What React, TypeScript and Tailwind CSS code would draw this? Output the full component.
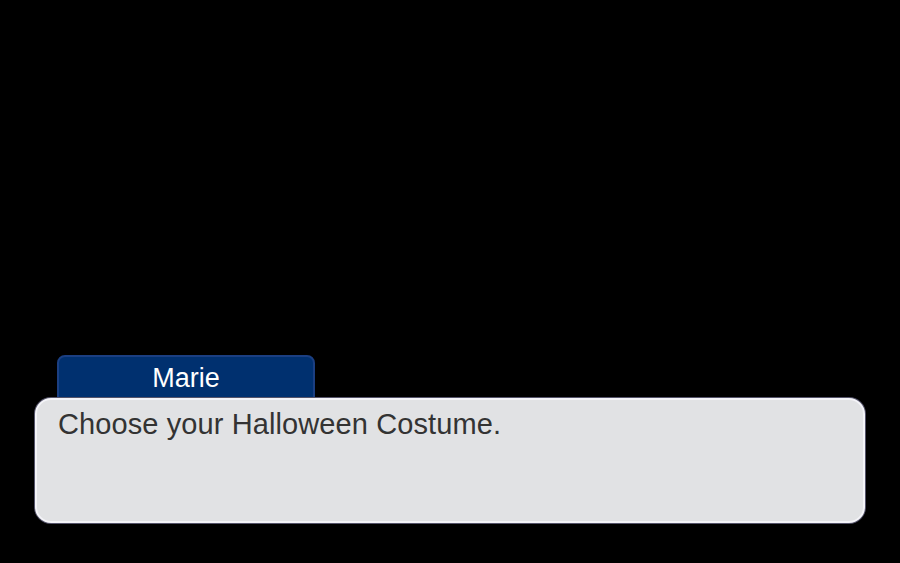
import React from "react";

/* dialogue box with speaker tab */

const App = () => {
  return (
    <div className="w-full h-screen bg-black flex flex-col justify-end px-[35px] pb-[40px] font-['Liberation_Sans',Arial,sans-serif]">

      {/* NAME TAB */}
      <div className="ml-[22px] w-[258px] h-[50px] -mb-[7px] rounded-t-[8px] border-2 border-[#1b3f82] bg-[#00306f] text-white text-[27px] leading-[31px] text-center pt-[6px]">
        Marie
      </div>

      {/* MESSAGE */}
      <div className="relative h-[125px] rounded-[16px] border-2 border-[#f4f4f8] bg-[#e1e2e4] shadow-[0_0_0_1px_#55546a] pl-[21px] pr-[20px] pt-[8px]">
        <p className="text-[29px] leading-[33px] tracking-[0.1px] text-[#333333]">
          Choose your Halloween Costume.
        </p>
      </div>

    </div>
  );
};

export default App;
